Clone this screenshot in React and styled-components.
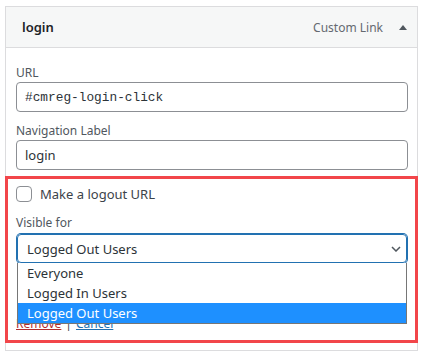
import styled, { createGlobalStyle } from "styled-components";

const GlobalStyle = createGlobalStyle`
  body {
    margin: 0;
    background: #fff;
    font-family: "Noto Sans", "Open Sans", sans-serif;
    color: #2c3338;
  }
  * { box-sizing: border-box; }
`;

const visibleOptions = ["Everyone", "Logged In Users", "Logged Out Users"];

export const App = () => {
  const current = "Logged Out Users";

  return (
    <Page>
      <GlobalStyle />
      <Panel>
        <Header>
          <Title>login</Title>
          <HeaderMeta>
            <ItemType>Custom Link</ItemType>
            <ToggleArrow />
          </HeaderMeta>
        </Header>
        <Settings>
          <Field>
            <FieldLabel>URL</FieldLabel>
            <TextInput mono readOnly defaultValue="#cmreg-login-click" />
          </Field>
          <Field gap={10}>
            <FieldLabel>Navigation Label</FieldLabel>
            <TextInput readOnly defaultValue="login" />
          </Field>

          <Highlight>
            <CheckRow>
              <CheckBox type="checkbox" readOnly />
              <CheckText>Make a logout URL</CheckText>
            </CheckRow>
            <Field gap={11}>
              <FieldLabel tall>Visible for</FieldLabel>
              <SelectWrap>
                <SelectBox>
                  <span>{current}</span>
                  <svg width="10" height="6" viewBox="0 0 10 6">
                    <polyline
                      points="1,1 5,5 9,1"
                      fill="none"
                      stroke="#50575e"
                      strokeWidth="1.5"
                    />
                  </svg>
                </SelectBox>
                <OptionList>
                  {visibleOptions.map((opt) => (
                    <Option key={opt} selected={opt === current}>
                      {opt}
                    </Option>
                  ))}
                </OptionList>
              </SelectWrap>
            </Field>
            <Actions>
              <RemoveLink href="#">Remove</RemoveLink>
              <Sep>|</Sep>
              <CancelLink href="#">Cancel</CancelLink>
            </Actions>
          </Highlight>
        </Settings>
      </Panel>
    </Page>
  );
};

export default App;

const Page = styled.div`
  padding: 6px 6px 0 5px;
`;

const Panel = styled.div`
  border: 1px solid #dcdcde;
  background: #fff;
`;

const Header = styled.div`
  height: 41px;
  background: #f6f7f7;
  border-bottom: 1px solid #dcdcde;
  display: flex;
  align-items: center;
  justify-content: space-between;
  padding: 0 10px 0 16px;
`;

const Title = styled.span`
  font-size: 13px;
  font-weight: 600;
  color: #1d2327;
`;

const HeaderMeta = styled.div`
  display: flex;
  align-items: center;
  gap: 16px;
`;

const ItemType = styled.span`
  font-size: 12px;
  color: #646970;
`;

const ToggleArrow = styled.span`
  width: 0;
  height: 0;
  border-left: 4px solid transparent;
  border-right: 4px solid transparent;
  border-bottom: 5px solid #50575e;
`;

const Settings = styled.div`
  padding: 16px 9px 7px 10px;
`;

const Field = styled.div`
  display: flex;
  flex-direction: column;
  margin-top: ${(p) => p.gap || 0}px;
`;

const FieldLabel = styled.label`
  font-size: 12px;
  line-height: ${(p) => (p.tall ? 20 : 18)}px;
  margin-bottom: ${(p) => (p.tall ? 1 : 0)}px;
  color: #50575e;
`;

const TextInput = styled.input`
  height: 30px;
  width: 100%;
  border: 1px solid #8c8f94;
  border-radius: 4px;
  padding: 0 8px;
  font-family: ${(p) =>
    p.mono ? '"Liberation Mono", monospace' : '"Noto Sans", sans-serif'};
  font-size: ${(p) => (p.mono ? "12.8px" : "13px")};
  color: #2c3338;
  background: #fff;
  outline: none;
`;

const Highlight = styled.div`
  margin: 6px -10px 0 -11px;
  border: 3px solid #f2464a;
  padding: 7px 7px 7px 8px;
`;

const CheckRow = styled.label`
  display: flex;
  align-items: center;
  height: 16px;
  gap: 8px;
`;

const CheckBox = styled.input`
  appearance: none;
  margin: 0;
  width: 16px;
  height: 16px;
  border: 1px solid #8c8f94;
  border-radius: 4px;
  background: #fff;
`;

const CheckText = styled.span`
  font-size: 13px;
  color: #3c434a;
`;

const SelectWrap = styled.div`
  position: relative;
`;

const SelectBox = styled.div`
  margin: 0 1px;
  height: 29px;
  border: 1px solid #2271b1;
  box-shadow: 0 0 0 1px #2271b1;
  border-radius: 4px;
  display: flex;
  align-items: center;
  justify-content: space-between;
  padding: 0 5px 0 9px;
  font-size: 13px;
  color: #2c3338;
`;

const OptionList = styled.ul`
  position: absolute;
  top: 100%;
  left: 1px;
  right: 1px;
  margin: 0;
  padding: 0;
  list-style: none;
  background: #fff;
  border: 1px solid #767676;
  border-top: none;
  z-index: 2;
`;

const Option = styled.li`
  height: 20px;
  line-height: 20px;
  padding: 0 9px;
  font-size: 13px;
  color: ${(p) => (p.selected ? "#fff" : "#2c3338")};
  background: ${(p) => (p.selected ? "#1e90ff" : "transparent")};
`;

const Actions = styled.div`
  margin-top: 51px;
  line-height: 19px;
  font-size: 12px;
  display: flex;
  gap: 4px;
`;

const RemoveLink = styled.a`
  color: #b32d2e;
  text-decoration: underline;
`;

const Sep = styled.span`
  color: #3c434a;
`;

const CancelLink = styled.a`
  color: #2271b1;
  text-decoration: underline;
`;
